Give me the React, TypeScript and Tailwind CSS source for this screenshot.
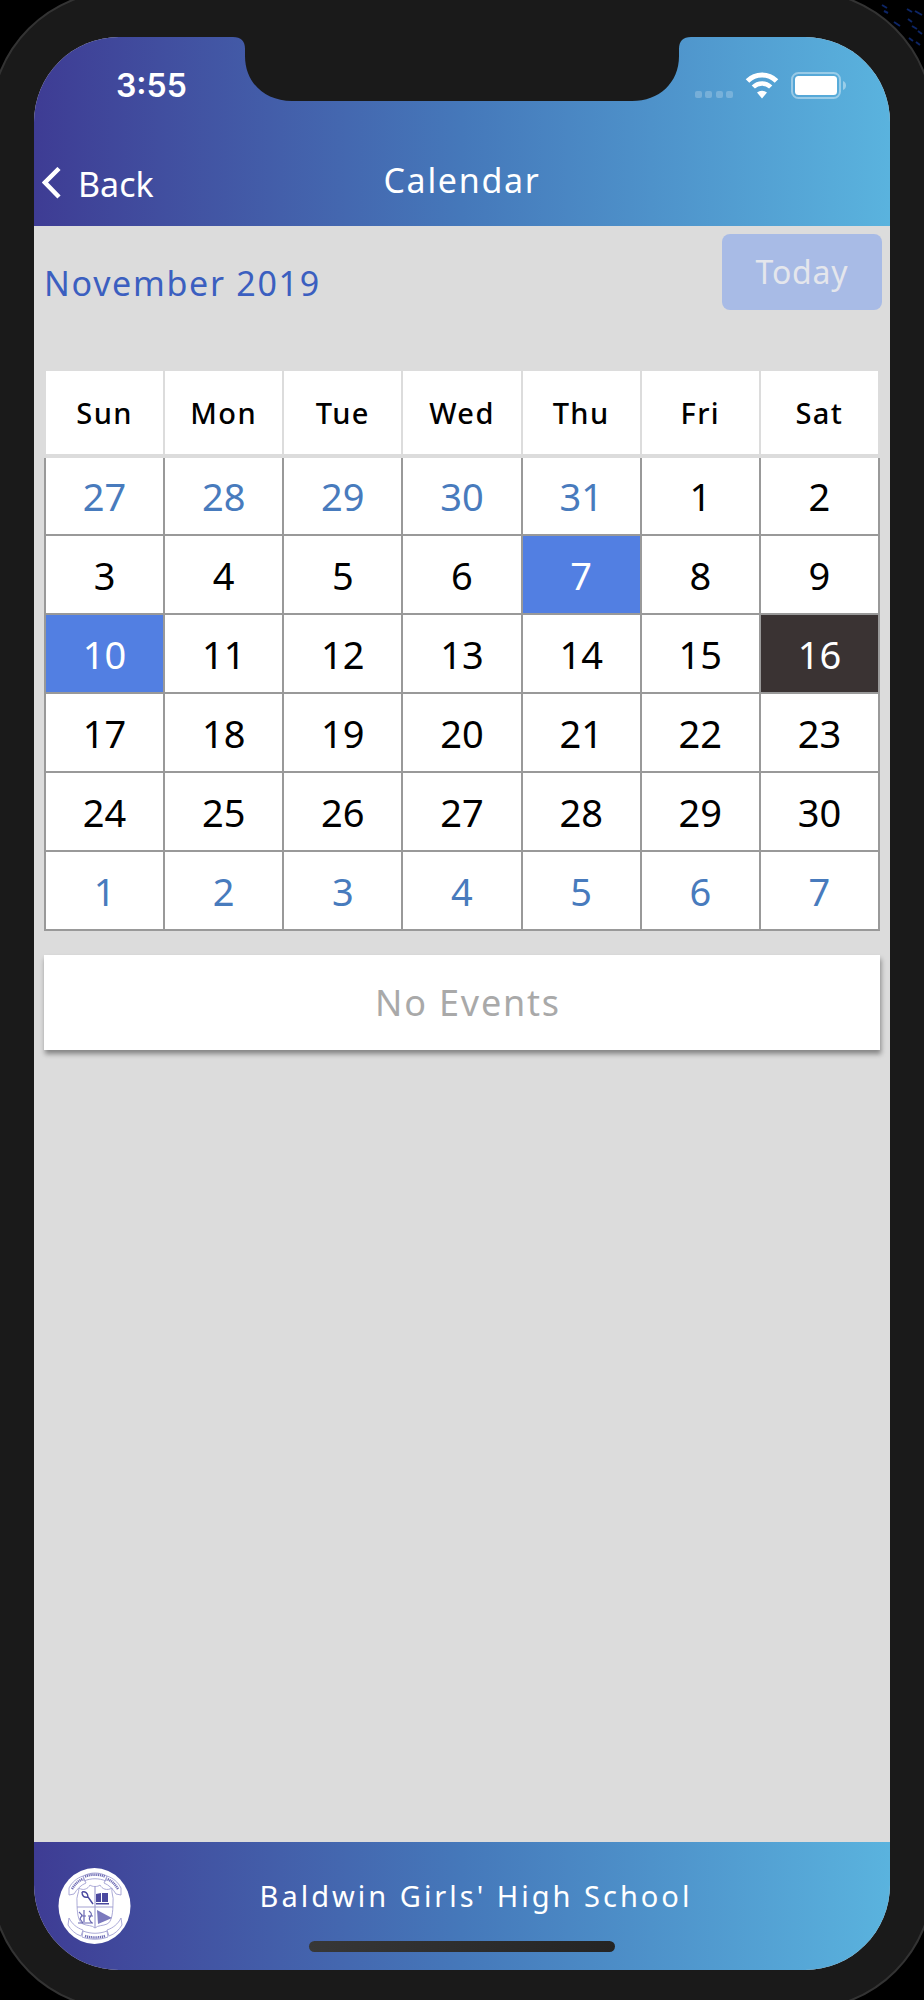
import React from "react";
import clsx from "clsx";

const weekdays = ["Sun", "Mon", "Tue", "Wed", "Thu", "Fri", "Sat"];

type Day = { day: number; kind?: "outside" | "event" | "today" };

const outside = (days: number[]): Day[] =>
  days.map((day) => ({ day, kind: "outside" }));

const november: Day[] = Array.from({ length: 30 }, (_, i) => {
  const day = i + 1;
  if (day === 7 || day === 10) return { day, kind: "event" };
  if (day === 16) return { day, kind: "today" };
  return { day };
});

const days = [
  ...outside([27, 28, 29, 30, 31]),
  ...november,
  ...outside([1, 2, 3, 4, 5, 6, 7]),
];

const weeks = Array.from({ length: 6 }, (_, i) => days.slice(i * 7, i * 7 + 7));

function Notch() {
  return (
    <svg
      className="absolute top-0 left-1/2 -translate-x-1/2"
      width="458"
      height="64"
      viewBox="0 0 458 64"
      aria-hidden="true"
    >
      <path
        d="M0 0C8 0 12 4 12 12V19C12 46 32 64 59 64H399C426 64 446 46 446 19V12C446 4 450 0 458 0Z"
        fill="#1a1a1a"
      />
    </svg>
  );
}

function StatusIcons() {
  return (
    <svg width="154" height="28" viewBox="0 0 154 28" aria-hidden="true">
      <g fill="#fff" fillOpacity="0.22">
        <rect x="1" y="19" width="7" height="7" rx="2" />
        <rect x="11" y="19" width="7" height="7" rx="2" />
        <rect x="22" y="19" width="7" height="7" rx="2" />
        <rect x="32" y="19" width="7" height="7" rx="2" />
      </g>
      <g fill="none" stroke="#fff" strokeWidth="5">
        <path d="M53.5 9a20.5 20.5 0 0 1 29 0" />
        <path d="M59.3 15a12.3 12.3 0 0 1 17.4 0" strokeWidth="4.5" />
      </g>
      <path d="M63 20.600a7.600 7.600 0 0 1 10 0l-5 5.900z" fill="#fff" />
      <rect
        x="98"
        y="1"
        width="48"
        height="25"
        rx="6.5"
        fill="none"
        stroke="#fff"
        strokeOpacity="0.4"
        strokeWidth="2"
      />
      <rect x="101" y="4" width="42" height="19" rx="3.5" fill="#fff" />
      <path d="M149 9c4 1.500 4 7.500 0 9z" fill="#fff" fillOpacity="0.4" />
    </svg>
  );
}

function Crest() {
  return (
    <svg width="74" height="76" viewBox="0 0 74 76" role="img" aria-label="School crest">
      <ellipse cx="36.5" cy="38" rx="36" ry="38" fill="#fff" />
      <g fill="none" stroke="#a3a2d2" strokeWidth="0.9">
        <path d="M21 20c4 3 9 1 11-3 2 2 8 2 10 0 2 4 7 6 12 3-1 5 2 9 1 14 0 10-1 20-6 22-4 2-9 1-12 4-3-3-8-2-12-4-5-2-6-12-6-22-1-5 2-9 2-14z" />
        <path d="M37 18v42M19 39h36" strokeWidth="1.200" />
        <path d="M11 20c3-6 8-10 14-12l3 7c-5 2-9 6-12 11l-5 1zM63 20c-3-6-8-10-14-12l-3 7c5 2 9 6 12 11l5 1z" />
        <path d="M25 8c8-4 16-4 24 0l-1 5c-7-3-15-3-22 0z" />
        <path d="M11 50c3 6 8 10 14 12l-2 6c-6-2-10-6-13-11zM63 50c-3 6-8 10-14 12l2 6c6-2 10-6 13-11z" />
        <path d="M25 63c8 3 16 3 24 0l1 6c-8 3-18 3-26 0z" />
      </g>
      <g fill="none" stroke="#6f6db5" strokeWidth="2.500" strokeDasharray="1.200 0.700">
        <path d="M14 21c3-5 6-8 11-10" />
        <path d="M27 8.500c7-2.500 13-2.500 20 0" />
        <path d="M60 21c-3-5-6-8-11-10" />
        <path d="M27 68c7 2 13 2 20 0" />
      </g>
      <path d="M24 24c3-1 6 1 6 5l5 7M24 24c0 4 2 6 6 5" fill="none" stroke="#4b499f" strokeWidth="1.400" />
      <path d="M38 26l5-1v9h-5zM44 25h6v9h-6zM38 35h13v1.500H38z" fill="#4b499f" />
      <path d="M39 42l15 8-14 6z" fill="#7b79bd" />
      <path d="M21 44l3 3-2 4 3 4M26 42v12M23 48h5M31 43c3 2 3 4 1 6s0 4 2 6M30 48h5M20 55h15" fill="none" stroke="#6765b0" strokeWidth="1.200" />
    </svg>
  );
}

function Header() {
  return (
    <header className="relative bg-linear-to-r from-[#3e3c94] via-[#4578ba] to-[#5ab3de] text-white">
      <Notch />
      <div className="flex h-[97px] items-center justify-between pr-[42px] pl-[82px]">
        <span className="font-[Inter,sans-serif] text-[32px] font-semibold">
          3:55
        </span>
        <StatusIcons />
      </div>
      <div className="grid h-[92px] grid-cols-[1fr_auto_1fr] items-center">
        <button type="button" className="flex items-center gap-4 pt-2 pl-2 text-[34px]">
          <svg width="20" height="34" viewBox="0 0 20 34" aria-hidden="true">
            <path d="M17 1.500L3 15.500L17 30" fill="none" stroke="#fff" strokeWidth="4.500" />
          </svg>
          Back
        </button>
        <h1 className="text-[34px] tracking-wider">Calendar</h1>
      </div>
    </header>
  );
}

function MonthTable() {
  return (
    <table className="w-full table-fixed border-collapse bg-white text-center">
      <thead>
        <tr>
          {weekdays.map((name) => (
            <th
              key={name}
              scope="col"
              className="h-[85px] border-x-2 border-b-4 border-[#dcdcdc] text-[29px] font-medium tracking-wider"
            >
              {name}
            </th>
          ))}
        </tr>
      </thead>
      <tbody>
        {weeks.map((week, i) => (
          <tr key={i}>
            {week.map(({ day, kind }) => (
              <td
                key={day}
                className={clsx(
                  "h-[79px] border-2 border-[#999] p-0",
                  kind === "outside" && "text-[#487bbd]",
                  kind === "event" && "bg-[#527fe2] text-white",
                  kind === "today" && "bg-[#3a3333] text-white"
                )}
              >
                <button type="button" className="w-full text-[38px] leading-[60px]">
                  {day}
                </button>
              </td>
            ))}
          </tr>
        ))}
      </tbody>
    </table>
  );
}

function Footer() {
  return (
    <footer className="flex h-[128px] flex-col bg-linear-to-r from-[#3e3c94] via-[#4578ba] to-[#5ab3de] text-white">
      <div className="flex h-[99px] items-start pl-6">
        <div className="pt-[26px]">
          <Crest />
        </div>
        <p className="flex-1 pt-8 pr-[70px] text-center text-[29px] leading-[44px] tracking-[3px]">
          Baldwin Girls' High School
        </p>
      </div>
      <div className="mx-auto h-[11px] w-[306px] rounded-full bg-linear-to-r from-[#373737] to-[#242424]" />
    </footer>
  );
}

export default function App() {
  return (
    <div className="relative flex min-h-screen flex-col overflow-hidden bg-black font-['Noto_Sans','Open_Sans',sans-serif]">
      <svg className="absolute top-0 right-0" width="48" height="52" viewBox="0 0 48 52" aria-hidden="true">
        <path
          d="M6 5l5 3M8 11l4 2M18 22l6 4M31 9l5 3M39 11l7 4M32 19l4 3M36 26l5 3M42 31l4 3M33 38l4 3M40 42l4 3"
          stroke="#0d2565"
          strokeWidth="2"
        />
      </svg>
      <div className="relative -m-[10px] flex flex-1 flex-col rounded-[130px] border-2 border-[#333] bg-[#1a1a1a] px-[42px] pt-[45px] pb-[38px]">
        <div className="flex flex-1 flex-col overflow-hidden rounded-[85px] bg-[#dcdcdc]">
          <Header />
          <main className="flex-1 px-[10px] pt-2">
            <div className="-mr-[2px] flex h-[137px] items-start justify-between">
              <h2 className="pt-[26px] text-[34px] leading-[46px] tracking-wider text-[#3b5fc0]">
                November 2019
              </h2>
              <button
                type="button"
                disabled
                className="h-[76px] w-40 rounded-lg bg-[#a8bbe6] text-[32px] tracking-wide text-[#e4e6ec]"
              >
                Today
              </button>
            </div>
            <MonthTable />
            <p className="mt-6 bg-white py-6 pl-3 text-center text-[36px] leading-[47px] tracking-wider text-[#a9a9a9] shadow-[1px_4px_5px_rgba(0,0,0,0.4)]">
              No Events
            </p>
          </main>
          <Footer />
        </div>
      </div>
    </div>
  );
}
